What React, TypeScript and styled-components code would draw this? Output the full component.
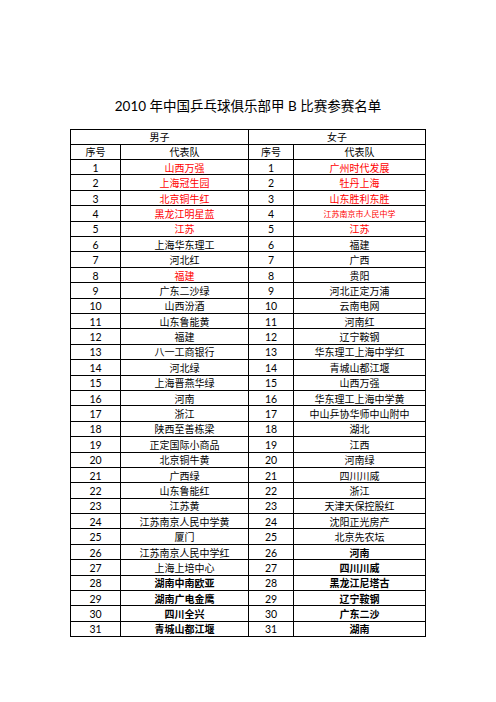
import React from 'react';
import styled, {createGlobalStyle} from 'styled-components';

const GlobalStyle = createGlobalStyle`
  html, body {
    margin: 0;
    padding: 0;
    background: #fff;
  }
  body {
    font-family: Lato, "Noto Sans CJK SC", sans-serif;
    color: #000;
  }
`

const Page = styled.div`
  width: 496px;
  height: 702px;
  padding-top: 96px;
  box-sizing: border-box;
  display: flex;
  flex-direction: column;
  align-items: center;
`

const Title = styled.h1`
  margin: 0 0 13px 0;
  height: 20px;
  line-height: 20px;
  font-size: 13.5px;
  font-weight: 400;
  font-family: Lato, "Noto Sans CJK SC", sans-serif;
  white-space: pre;
`

const Table = styled.table`
  border-collapse: collapse;
  table-layout: fixed;
  width: 356px;
  margin-left: 0px;
`

const Row = styled.tr<{$h?: number}>`
  height: ${p => p.$h || 15.4}px;
`

const Cell = styled.td<{$red?: boolean; $bold?: boolean; $small?: boolean}>`
  border: 1px solid #000;
  padding: 1px 0 0 0;
  text-align: center;
  vertical-align: middle;
  font-size: ${p => p.$small ? 8 : 10}px;
  line-height: 12px;
  font-weight: ${p => p.$bold ? 700 : 400};
  color: ${p => p.$red ? '#ff0000' : '#000'};
  white-space: nowrap;
  overflow: hidden;
`

const Num = styled(Cell)`
  font-size: 10.5px;
  font-weight: 400;
`

type Team = {name: string; red?: boolean; bold?: boolean; small?: boolean}

const men: Team[] = [
  {name: '山西万强', red: true},
  {name: '上海冠生园', red: true},
  {name: '北京铜牛红', red: true},
  {name: '黑龙江明星蓝', red: true},
  {name: '江苏', red: true},
  {name: '上海华东理工'},
  {name: '河北红'},
  {name: '福建', red: true},
  {name: '广东二沙绿'},
  {name: '山西汾酒'},
  {name: '山东鲁能黄'},
  {name: '福建'},
  {name: '八一工商银行'},
  {name: '河北绿'},
  {name: '上海晋燕华绿'},
  {name: '河南'},
  {name: '浙江'},
  {name: '陕西至善栋梁'},
  {name: '正定国际小商品'},
  {name: '北京铜牛黄'},
  {name: '广西绿'},
  {name: '山东鲁能红'},
  {name: '江苏黄'},
  {name: '江苏南京人民中学黄'},
  {name: '厦门'},
  {name: '江苏南京人民中学红'},
  {name: '上海上培中心'},
  {name: '湖南中南欧亚', bold: true},
  {name: '湖南广电金鹰', bold: true},
  {name: '四川全兴', bold: true},
  {name: '青城山都江堰', bold: true},
]

const women: Team[] = [
  {name: '广州时代发展', red: true},
  {name: '牡丹上海', red: true},
  {name: '山东胜利东胜', red: true},
  {name: '江苏南京市人民中学', red: true, small: true},
  {name: '江苏', red: true},
  {name: '福建'},
  {name: '广西'},
  {name: '贵阳'},
  {name: '河北正定万浦'},
  {name: '云南电网'},
  {name: '河南红'},
  {name: '辽宁鞍钢'},
  {name: '华东理工上海中学红'},
  {name: '青城山都江堰'},
  {name: '山西万强'},
  {name: '华东理工上海中学黄'},
  {name: '中山乒协华师中山附中'},
  {name: '湖北'},
  {name: '江西'},
  {name: '河南绿'},
  {name: '四川川威'},
  {name: '浙江'},
  {name: '天津天保控股红'},
  {name: '沈阳正光房产'},
  {name: '北京先农坛'},
  {name: '河南', bold: true},
  {name: '四川川威', bold: true},
  {name: '黑龙江尼塔古', bold: true},
  {name: '辽宁鞍钢', bold: true},
  {name: '广东二沙', bold: true},
  {name: '湖南', bold: true},
]

export default function App() {
  return (
    <>
      <GlobalStyle />
      <Page>
        <Title>2010 年中国乒乓球俱乐部甲 B 比赛参赛名单</Title>
        <Table>
          <colgroup>
            <col style={{width: 50}} />
            <col style={{width: 128}} />
            <col style={{width: 45}} />
            <col style={{width: 132}} />
          </colgroup>
          <tbody>
            <Row $h={14.7}>
              <Cell colSpan={2}>男子</Cell>
              <Cell colSpan={2}>女子</Cell>
            </Row>
            <Row>
              <Cell>序号</Cell>
              <Cell>代表队</Cell>
              <Cell>序号</Cell>
              <Cell>代表队</Cell>
            </Row>
            {men.map((m, i) => {
              const w = women[i]
              return (
                <Row key={i}>
                  <Num>{i + 1}</Num>
                  <Cell $red={m.red} $bold={m.bold} $small={m.small}>{m.name}</Cell>
                  <Num>{i + 1}</Num>
                  <Cell $red={w.red} $bold={w.bold} $small={w.small}>{w.name}</Cell>
                </Row>
              )
            })}
          </tbody>
        </Table>
      </Page>
    </>
  )
}
